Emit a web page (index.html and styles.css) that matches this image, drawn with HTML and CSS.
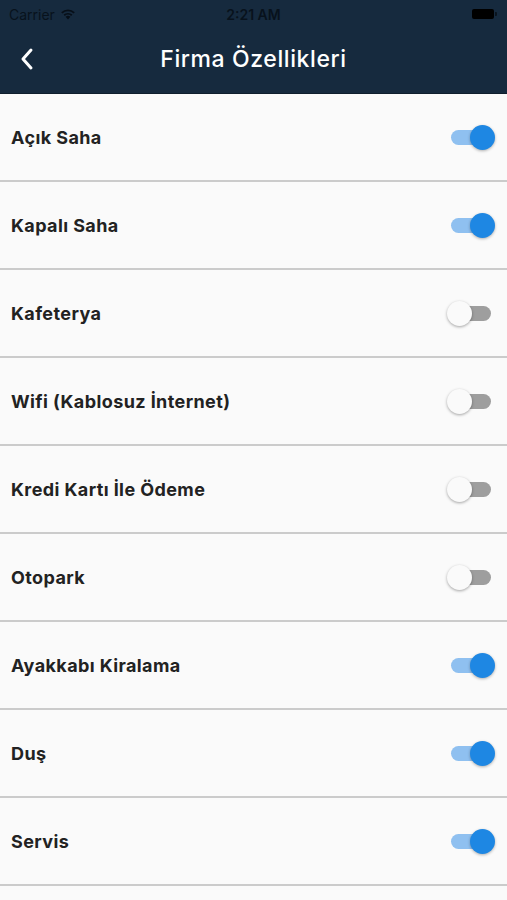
FILE: index.html
```html
<!DOCTYPE html>
<html>
<head>
<meta charset="utf-8">
<link rel="stylesheet" href="styles.css">
</head>
<body>
<div class="header">
  <div class="status">
    <div class="status-left">
      <span class="carrier">Carrier</span>
      <svg class="wifi" width="16" height="12" viewBox="0 0 16 12">
        <path d="M8 11.5 L5.6 8.8 A3.6 3.6 0 0 1 10.4 8.8 Z" fill="#070f18"/>
        <path d="M3.6 6.6 A6.5 6.5 0 0 1 12.4 6.6 L11.2 7.9 A4.8 4.8 0 0 0 4.8 7.9 Z" fill="#070f18"/>
        <path d="M1.2 4.2 A10 10 0 0 1 14.8 4.2 L13.6 5.5 A8.2 8.2 0 0 0 2.4 5.5 Z" fill="#070f18"/>
      </svg>
    </div>
    <span class="time">2:21 AM</span>
    <div class="battery"><div class="battery-body"></div><div class="battery-tip"></div></div>
  </div>
  <div class="nav">
    <svg class="back" width="14" height="24" viewBox="0 0 14 24">
      <path d="M11 3 L3 12 L11 21" fill="none" stroke="#ffffff" stroke-width="3" stroke-linecap="round" stroke-linejoin="round"/>
    </svg>
    <div class="title">Firma Özellikleri</div>
  </div>
</div>
<div class="list">
  <div class="row"><span class="label">Açık Saha</span><div class="toggle on"><div class="track"></div><div class="thumb"></div></div></div>
  <div class="row"><span class="label">Kapalı Saha</span><div class="toggle on"><div class="track"></div><div class="thumb"></div></div></div>
  <div class="row"><span class="label">Kafeterya</span><div class="toggle off"><div class="track"></div><div class="thumb"></div></div></div>
  <div class="row"><span class="label">Wifi (Kablosuz İnternet)</span><div class="toggle off"><div class="track"></div><div class="thumb"></div></div></div>
  <div class="row"><span class="label">Kredi Kartı İle Ödeme</span><div class="toggle off"><div class="track"></div><div class="thumb"></div></div></div>
  <div class="row"><span class="label">Otopark</span><div class="toggle off"><div class="track"></div><div class="thumb"></div></div></div>
  <div class="row"><span class="label">Ayakkabı Kiralama</span><div class="toggle on"><div class="track"></div><div class="thumb"></div></div></div>
  <div class="row"><span class="label">Duş</span><div class="toggle on"><div class="track"></div><div class="thumb"></div></div></div>
  <div class="row"><span class="label">Servis</span><div class="toggle on"><div class="track"></div><div class="thumb"></div></div></div>
</div>
</body>
</html>
```
FILE: styles.css
```css
* { box-sizing: border-box; }
html, body { margin: 0; padding: 0; }
body {
  width: 507px;
  height: 900px;
  overflow: hidden;
  background: #fafafa;
  font-family: Inter, "Liberation Sans", Arial, sans-serif;
}
.header {
  background: #162a3e;
  height: 94px;
  border-bottom: 1px solid #0f1e2d;
}
.status {
  height: 28px;
  display: flex;
  align-items: center;
  justify-content: space-between;
  padding: 0 10px 0 9px;
  position: relative;
}
.status-left { display: flex; align-items: center; gap: 5px; }
.carrier { color: #08121c; font-size: 14px; }
.wifi { margin-top: -1px; }
.time {
  position: absolute;
  left: 0; right: 0;
  text-align: center;
  color: #08121c;
  font-size: 14px;
  font-weight: 600;
}
.battery { display: flex; align-items: center; gap: 1px; }
.battery-body { width: 22px; height: 10px; background: #000; border-radius: 2px; }
.battery-tip { width: 2px; height: 4px; background: #0a141e; border-radius: 0 1px 1px 0; }
.nav {
  height: 64px;
  display: flex;
  align-items: center;
  justify-content: center;
  position: relative;
  padding-bottom: 2px;
}
.back { position: absolute; left: 20px; top: 19px; }
.title {
  color: #ffffff;
  font-size: 23px;
  font-weight: 500;
  letter-spacing: 0.6px;
}
.list { display: flex; flex-direction: column; }
.row {
  height: 88px;
  display: flex;
  align-items: center;
  justify-content: space-between;
  padding: 0 12px 0 11px;
  border-bottom: 2px solid #cbcbcb;
}
.label {
  font-size: 18px;
  font-weight: 700;
  letter-spacing: 0.4px;
  color: #222222;
}
.toggle {
  position: relative;
  width: 48px;
  height: 25px;
}
.track {
  position: absolute;
  top: 5px;
  height: 15px;
  border-radius: 8px;
}
.thumb {
  position: absolute;
  top: 0;
  width: 25px;
  height: 25px;
  border-radius: 50%;
}
.on .track { left: 4px; width: 34px; background: #8fc0f0; }
.on .thumb { right: 0; background: #1e87e3; box-shadow: 0 1px 3px rgba(0,0,0,0.3); }
.off .track { left: 14px; width: 30px; background: #9e9e9e; }
.off .thumb { left: 0; background: #fafafa; box-shadow: 0 1px 3px rgba(0,0,0,0.35); }
```
